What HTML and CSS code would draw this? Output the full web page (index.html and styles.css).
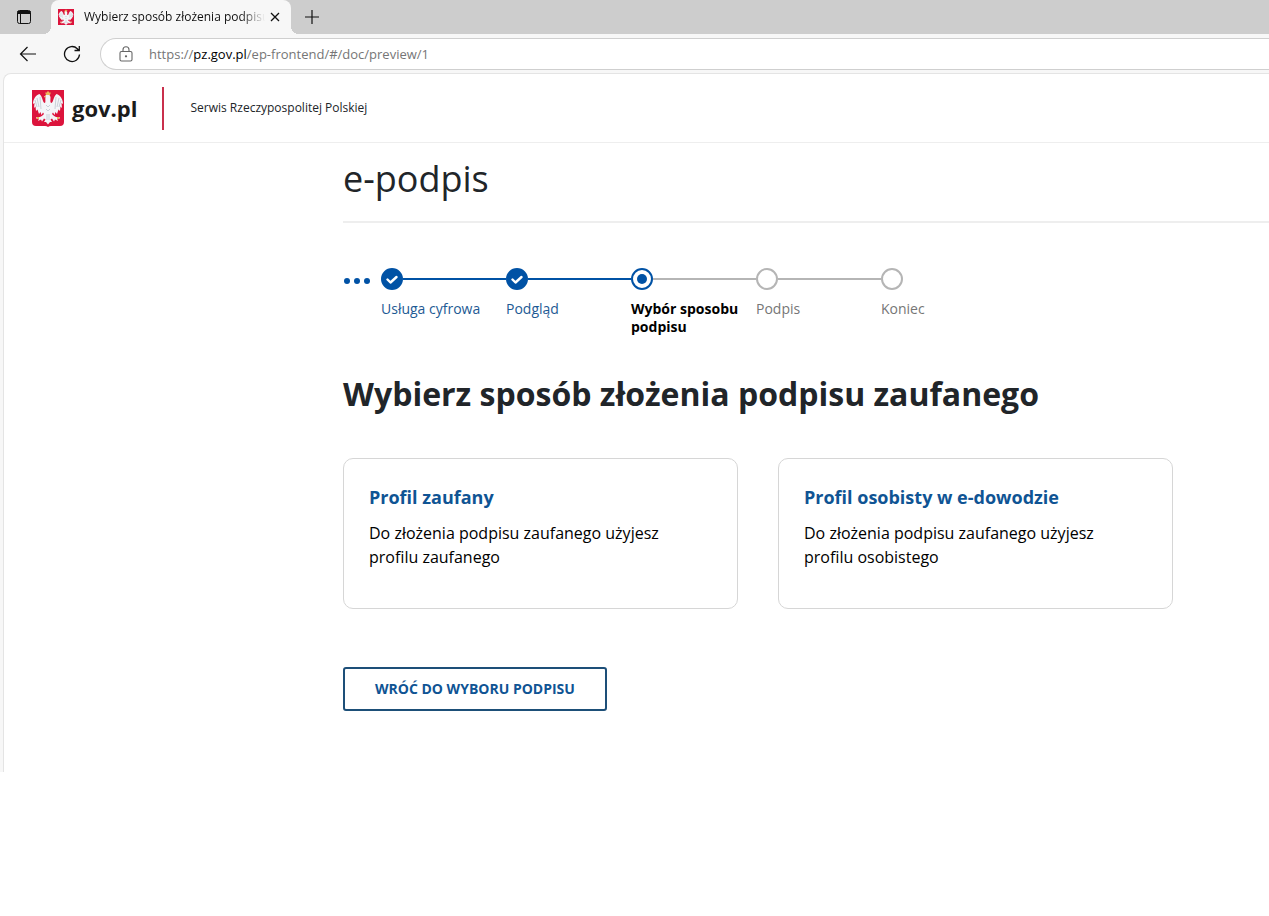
FILE: index.html
```html
<!DOCTYPE html>
<html lang="pl">
<head>
<meta charset="utf-8">
<title>Wybierz sposób złożenia podpisu</title>
<link rel="stylesheet" href="styles.css">
</head>
<body>
<svg width="0" height="0" class="sprite" aria-hidden="true">
  <symbol id="eagle" viewBox="0 0 32 37">
    <path fill="#dc143c" d="M0 0H32V32Q32 36 28 36H19Q17 36 16 37Q15 36 13 36H4Q0 36 0 32Z"/>
    <path fill="#f4f5f8" d="M13.500 7C13 10 14 13 12.500 13C10 11 11 7 7.500 4C4 5 1 9 1 14L2.500 13L2 18L3.500 16.500L4 21L5.500 19.500L7 24L8.500 22L9.500 25L11 22.500L12 24C10 26 8 28 4.500 27L4 28.500L7 28.500L6 31L9 29.500L10 31.500L12 28.500L13.500 29.500L12 32L14 32L16 34.500L18 32L20 32L18.500 29.500L20 28.500L22 31.500L23 29.500L26 31L25 28.500L28 28.500L27.500 27C24 28 22 26 20 24L21 22.500L22.500 25L23.500 22L25 24L26.500 19.500L28 21L28.500 16.500L30 18L29.500 13L31 14C31 9 28 5 24.500 4C21 7 22 11 19.500 13C18 13 18.500 10 18.500 7L17.500 5L14.500 4.500L12 7Z"/>
    <path fill="none" stroke="#b8c0cc" stroke-width=".7" d="M5 8L7 17M8 7L9 19M3 10L5 17M27 8L25 17M24 7L23 19M29 10L27 17M14 15L16 17L18 15M14 19L16 21L18 19M15 24V30M17 24V30"/>
    <path fill="#e9b65a" d="M13 2L14 3L16 1L18 3L19 2L18 5H14ZM12 6L14 6L13 8ZM5 27H7V29H5ZM25 27H27V29H25Z"/>
  </symbol>
</svg>
<div class="browser">
  <div class="tabs">
    <button class="icon-btn tab-menu" aria-label="Menu kart">
      <svg width="16" height="16" viewBox="0 0 16 16" fill="none" stroke="#111"><rect x="1.5" y="1.5" width="13" height="13" rx="2"/><path d="M1.5 3.5h13" stroke-width="3"/><path d="M4.5 4v10"/></svg>
    </button>
    <div class="tab">
      <svg class="favicon" width="16" height="16" viewBox="0 0 32 34" preserveAspectRatio="none"><path fill="#c9253f" d="M0 0h32v34H0z"/><use href="#eagle" width="32" height="37"/></svg>
      <span class="tab-title">Wybierz sposób złożenia podpisu</span>
      <button class="icon-btn tab-close" aria-label="Zamknij kartę">
        <svg width="10" height="10" viewBox="0 0 10 10" stroke="#111" stroke-width="1.3"><path d="M1 1l8 8M9 1l-8 8"/></svg>
      </button>
    </div>
    <button class="icon-btn tab-new" aria-label="Nowa karta">
      <svg width="14" height="14" viewBox="0 0 14 14" stroke="#111" stroke-width="1.2"><path d="M7 0v14M0 7h14"/></svg>
    </button>
  </div>
  <div class="toolbar">
    <button class="icon-btn" aria-label="Wstecz">
      <svg width="18" height="16" viewBox="0 0 18 16" fill="none" stroke="#111" stroke-width="1.2"><path d="M17 8H1.5M8.500 1L1.500 8l7 7"/></svg>
    </button>
    <button class="icon-btn reload" aria-label="Odśwież">
      <svg width="18" height="18" viewBox="0 0 18 18" fill="none" stroke="#111" stroke-width="1.3"><path d="M16.500 9.500A7.500 7.500 0 1 1 14.300 3.700L16 5.500M16.300 1v4.500H11.500"/></svg>
    </button>
    <div class="address">
      <svg width="14" height="16" viewBox="0 0 14 16" fill="none" stroke="#666" stroke-width="1.1"><rect x="1" y="5.500" width="12" height="9.500" rx="1.500"/><path d="M4 5.500V3.700a3 3 0 0 1 6 0v1.800"/><circle cx="7" cy="10.300" r=".6" fill="#666"/></svg>
      <div class="url" role="textbox" aria-label="Pasek adresu" contenteditable="true" spellcheck="false">https://<span class="url-host">pz.gov.pl</span>/ep-frontend/#/doc/preview/1</div>
    </div>
  </div>
  <div class="viewport">
    <div class="page">
      <header class="gov-header">
        <a class="gov-logo" href="#"><svg width="32" height="37"><use href="#eagle"/></svg><span>gov.pl</span></a>
        <span class="gov-name">Serwis Rzeczypospolitej Polskiej</span>
      </header>
      <main class="content">
        <h1 class="app-title">e-podpis</h1>
        <div class="progress">
          <button class="more" aria-label="Wcześniejsze kroki"><i></i><i></i><i></i></button>
          <ol class="steps">
            <li class="step done"><span class="mark"><svg width="14" height="10" viewBox="0 0 14 10" fill="none" stroke="#fff" stroke-width="2.4" stroke-linecap="round" stroke-linejoin="round"><path d="M2.500 5.500L5.500 8.500L11.500 3"/></svg></span><a class="label" href="#">Usługa cyfrowa</a></li>
            <li class="step done"><span class="mark"><svg width="14" height="10" viewBox="0 0 14 10" fill="none" stroke="#fff" stroke-width="2.4" stroke-linecap="round" stroke-linejoin="round"><path d="M2.500 5.500L5.500 8.500L11.500 3"/></svg></span><a class="label" href="#">Podgląd</a></li>
            <li class="step current" aria-current="step"><span class="mark"></span><span class="label">Wybór sposobu podpisu</span></li>
            <li class="step"><span class="mark"></span><span class="label">Podpis</span></li>
            <li class="step"><span class="mark"></span><span class="label">Koniec</span></li>
          </ol>
        </div>
        <h2 class="heading">Wybierz sposób złożenia podpisu zaufanego</h2>
        <div class="cards">
          <a class="card" href="#"><h3>Profil zaufany</h3><p>Do złożenia podpisu zaufanego użyjesz profilu zaufanego</p></a>
          <a class="card" href="#"><h3>Profil osobisty w e-dowodzie</h3><p>Do złożenia podpisu zaufanego użyjesz profilu osobistego</p></a>
        </div>
        <button class="back">WRÓĆ DO WYBORU PODPISU</button>
      </main>
    </div>
  </div>
</div>
</body>
</html>
```
FILE: styles.css
```css
* { box-sizing: border-box; }
body { margin: 0; background: #fff; color: #212529; font-family: "Open Sans", "Noto Sans", sans-serif; }
h1, h2, h3, p, ol { margin: 0; padding: 0; }
a { color: inherit; text-decoration: none; }
button { font: inherit; cursor: pointer; }
svg { display: block; flex: none; }
.sprite { position: absolute; }
.icon-btn { display: flex; align-items: center; justify-content: center; padding: 0; border: 0; background: none; }

.tabs { display: flex; height: 34px; background: #cdcdcd; overflow: hidden; }
.tab-menu { width: 48px; }
.tab { position: relative; display: flex; align-items: center; width: 240px; margin-left: 3px; padding: 0 10px 0 7px; border-radius: 8px 8px 0 0; background: #f7f7f7; }
.tab::before, .tab::after { content: ""; position: absolute; bottom: 0; width: 8px; height: 8px; }
.tab::before { right: 100%; background: radial-gradient(circle at 0 0, #cdcdcd 8px, #f7f7f7 8px); }
.tab::after { left: 100%; background: radial-gradient(circle at 100% 0, #cdcdcd 8px, #f7f7f7 8px); }
.tab-title { flex: 1; margin-left: 10px; white-space: nowrap; color: #111; font-size: 12px; line-height: 18px; -webkit-mask-image: linear-gradient(to left, transparent 4px, #000 28px); mask-image: linear-gradient(to left, transparent 4px, #000 28px); }
.tab-close { width: 12px; height: 24px; }
.tab-new { width: 42px; }

.toolbar { display: flex; align-items: center; height: 39px; padding-left: 19px; background: #f7f7f7; }
.reload { margin: 0 19px 0 26px; }
.address { display: flex; flex: 1; align-items: center; gap: 16px; height: 32px; padding-left: 18px; border: 1px solid #cfcfcf; border-right: 0; border-radius: 16px 0 0 16px; background: #fff; }
.url { flex: 1; outline: 0; color: #767676; font-size: 13px; line-height: 20px; white-space: nowrap; }
.url-host { color: #000; }

.viewport { padding-left: 3px; background: #f7f7f7; }
.page { padding-bottom: 61px; border: solid #e4e4e4; border-width: 1px 0 0 1px; border-top-left-radius: 8px; background: #fff; }
.gov-header { display: flex; align-items: center; height: 69px; padding-left: 28px; border-bottom: 1px solid #eee; }
.gov-logo { display: flex; align-items: center; gap: 8px; height: 43px; padding-right: 25px; border-right: 2px solid #c9304c; color: #1b1b1b; font-size: 22px; font-weight: 700; line-height: 32px; }
.gov-name { margin-left: 26px; font-size: 12px; line-height: 18px; }

.content { padding-left: 339px; }
.app-title { padding: 11px 0 17px; border-bottom: 2px solid #eee; font-size: 36px; font-weight: 400; line-height: 50px; }
.progress { display: flex; margin-top: 45px; }
.more { display: flex; align-items: center; gap: 4px; width: 38px; height: 26px; padding: 0 0 0 1px; border: 0; background: none; }
.more i { width: 6px; height: 6px; border-radius: 50%; background: #0052a5; }
.steps { display: flex; list-style: none; }
.step { position: relative; width: 125px; color: #767676; font-size: 14px; line-height: 18px; }
.step::after { content: ""; position: absolute; top: 10px; left: 22px; right: 0; height: 2px; background: #b5b5b5; }
.step:last-child::after { display: none; }
.step.done::after { background: #0052a5; }
.mark { display: flex; align-items: center; justify-content: center; width: 22px; height: 22px; margin-bottom: 10px; border: 2px solid #b5b5b5; border-radius: 50%; background: #fff; }
.label { display: block; }
.done { color: #1d5a94; }
.done .mark { border-color: #0052a5; background: #0052a5; }
.current { color: #000; font-weight: 700; }
.current .mark { border-color: #0052a5; }
.current .mark::before { content: ""; width: 10px; height: 10px; border-radius: 50%; background: #0052a5; }
.heading { margin-top: 36px; font-size: 32px; font-weight: 700; line-height: 44px; }
.cards { display: grid; grid-template-columns: 1fr 1fr; gap: 40px; max-width: 830px; margin-top: 42px; }
.card { min-height: 151px; padding: 25px; border: 1px solid #d6d6d6; border-radius: 10px; color: #000; font-size: 16px; line-height: 24px; }
.card h3 { margin-bottom: 11px; color: #0f5494; font-size: 18px; line-height: 26px; }
.card p { max-width: 320px; }
.back { display: block; margin-top: 58px; height: 44px; padding: 0 30px; border: 2px solid #1d4f78; border-radius: 3px; background: #fff; color: #0f5494; font-size: 14px; font-weight: 700; line-height: 20px; }
```
